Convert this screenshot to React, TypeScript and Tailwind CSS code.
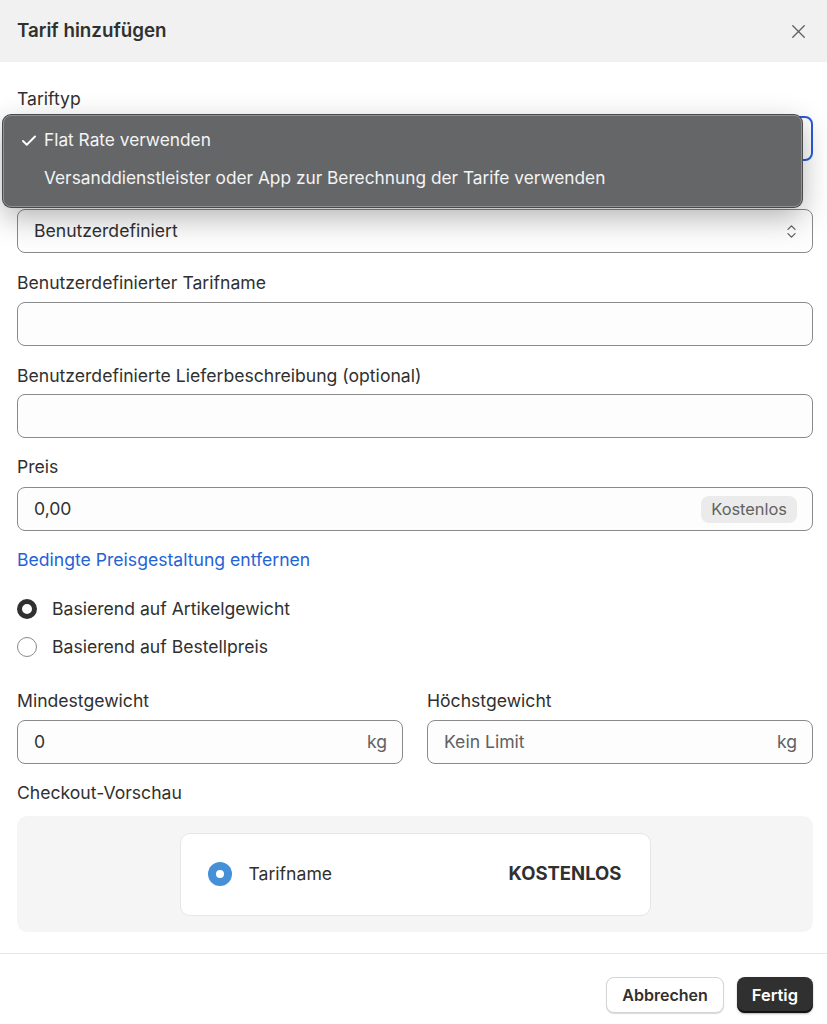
import { X, ChevronsUpDown, Check } from "lucide-react";

const font = { fontFamily: "Inter, 'Noto Sans', sans-serif" };

function Label({ children, className = "" }: { children: React.ReactNode; className?: string }) {
  return <div className={`h-6 leading-6 text-[17.6px] text-[#303030] ${className}`}>{children}</div>;
}

function Field({ children, className = "" }: { children?: React.ReactNode; className?: string }) {
  return (
    <div
      className={`flex items-center h-[44px] px-4 rounded-[8px] border border-[#8a8a8a] bg-[#fdfdfd] text-[17.6px] text-[#303030] ${className}`}
    >
      {children}
    </div>
  );
}

export default function App() {
  return (
    <div className="w-[827px] h-[1024px] bg-white overflow-hidden" style={font}>
      <div className="flex items-center justify-between h-[62px] pl-[17px] pr-[17px] bg-[#f1f1f1]">
        <span className="text-[18.8px] font-semibold text-[#303030]">Tarif hinzufügen</span>
        <X size={23} strokeWidth={1.4} className="text-[#616161]" />
      </div>

      <div className="pt-[25px] pl-[17px] pr-[14px] flex flex-col">
        <Label className="mb-[5px]">Tariftyp</Label>
        <div className="relative">
          <div className="h-[45px] rounded-[8px] border-2 border-[#2a5bd7]" />
          <div className="absolute left-[-14px] top-[-1px] w-[799px] h-[92px] rounded-[8px] bg-[#646668] border border-[#8e9092] shadow-[0_10px_30px_rgba(0,0,0,0.3)] ring-1 ring-[#4a4b4c] text-[17.3px] text-[#f4f4f4]">
            <div className="flex items-center h-[23px] mt-[12px]">
              <Check size={18} strokeWidth={2.6} className="ml-[16px] mr-[6px] mt-[3px] text-white" />
              <span>Flat Rate verwenden</span>
            </div>
            <div className="flex items-center h-[23px] mt-[15px] pl-[40px]">
              Versanddienstleister oder App zur Berechnung der Tarife verwenden
            </div>
          </div>
        </div>

        <Field className="mt-[48px] justify-between">
          <span>Benutzerdefiniert</span>
          <ChevronsUpDown size={17} strokeWidth={1.8} className="text-[#616161] -mr-1" />
        </Field>

        <Label className="mt-[18px] mb-[7px]">Benutzerdefinierter Tarifname</Label>
        <Field />

        <Label className="mt-[18px] mb-[6px]">Benutzerdefinierte Lieferbeschreibung (optional)</Label>
        <Field />

        <Label className="mt-[17px] mb-[8px]">Preis</Label>
        <Field className="h-[43px] justify-between pr-[15px]">
          <span>0,00</span>
          <span className="h-[27px] px-[10px] flex items-center rounded-[8px] bg-[#ebebeb] text-[16.4px] text-[#616161]">
            Kostenlos
          </span>
        </Field>

        <div className="mt-[17px] h-6 leading-6 text-[17.6px] text-[#2463d6]">Bedingte Preisgestaltung entfernen</div>

        <div className="mt-[25px] flex items-center gap-[15px] h-6">
          <span className="w-5 h-5 rounded-full border-[5px] border-[#303030] bg-white" />
          <span className="text-[17.6px] text-[#303030]">Basierend auf Artikelgewicht</span>
        </div>
        <div className="mt-[14px] flex items-center gap-[15px] h-6">
          <span className="w-5 h-5 rounded-full border border-[#8a8a8a] bg-white" />
          <span className="text-[17.6px] text-[#303030]">Basierend auf Bestellpreis</span>
        </div>

        <div className="mt-[30px] grid grid-cols-2 gap-x-[24px]">
          <div>
            <Label className="mb-[7px]">Mindestgewicht</Label>
            <Field className="h-[43px] justify-between pr-[15px]">
              <span>0</span>
              <span className="text-[#616161]">kg</span>
            </Field>
          </div>
          <div>
            <Label className="mb-[7px]">Höchstgewicht</Label>
            <Field className="h-[43px] justify-between pr-[15px]">
              <span className="text-[#616161]">Kein Limit</span>
              <span className="text-[#616161]">kg</span>
            </Field>
          </div>
        </div>

        <Label className="mt-[17px] mb-[11px]">Checkout-Vorschau</Label>
        <div className="h-[116px] rounded-[10px] bg-[#f5f5f5] flex items-center justify-center">
          <div className="w-[471px] h-[83px] rounded-[10px] bg-white border border-[#e6e6e6] flex items-center pl-[27px] pr-[28px]">
            <span className="w-[24px] h-[24px] rounded-full bg-[#4590d6] flex items-center justify-center">
              <span className="w-[8px] h-[8px] rounded-full bg-white" />
            </span>
            <span className="ml-[17px] text-[17.6px] text-[#303030]">Tarifname</span>
            <span className="ml-auto text-[18.5px] font-bold text-[#303030]">KOSTENLOS</span>
          </div>
        </div>
      </div>

      <div className="mt-[21px] border-t border-[#e8e8e8] pt-[23px] pr-[14px] flex justify-end gap-[13px]">
        <button className="h-[36px] px-[15px] rounded-[8px] bg-white border border-[#d4d4d4] shadow-[0_1px_1px_rgba(0,0,0,0.15)] text-[16px] font-semibold text-[#303030]">
          Abbrechen
        </button>
        <button className="h-[36px] px-[15px] rounded-[8px] bg-[#303030] shadow-[inset_0_-2px_0_rgba(0,0,0,0.6),0_1px_2px_rgba(0,0,0,0.3)] text-[16.5px] font-semibold text-white">
          Fertig
        </button>
      </div>
    </div>
  );
}
